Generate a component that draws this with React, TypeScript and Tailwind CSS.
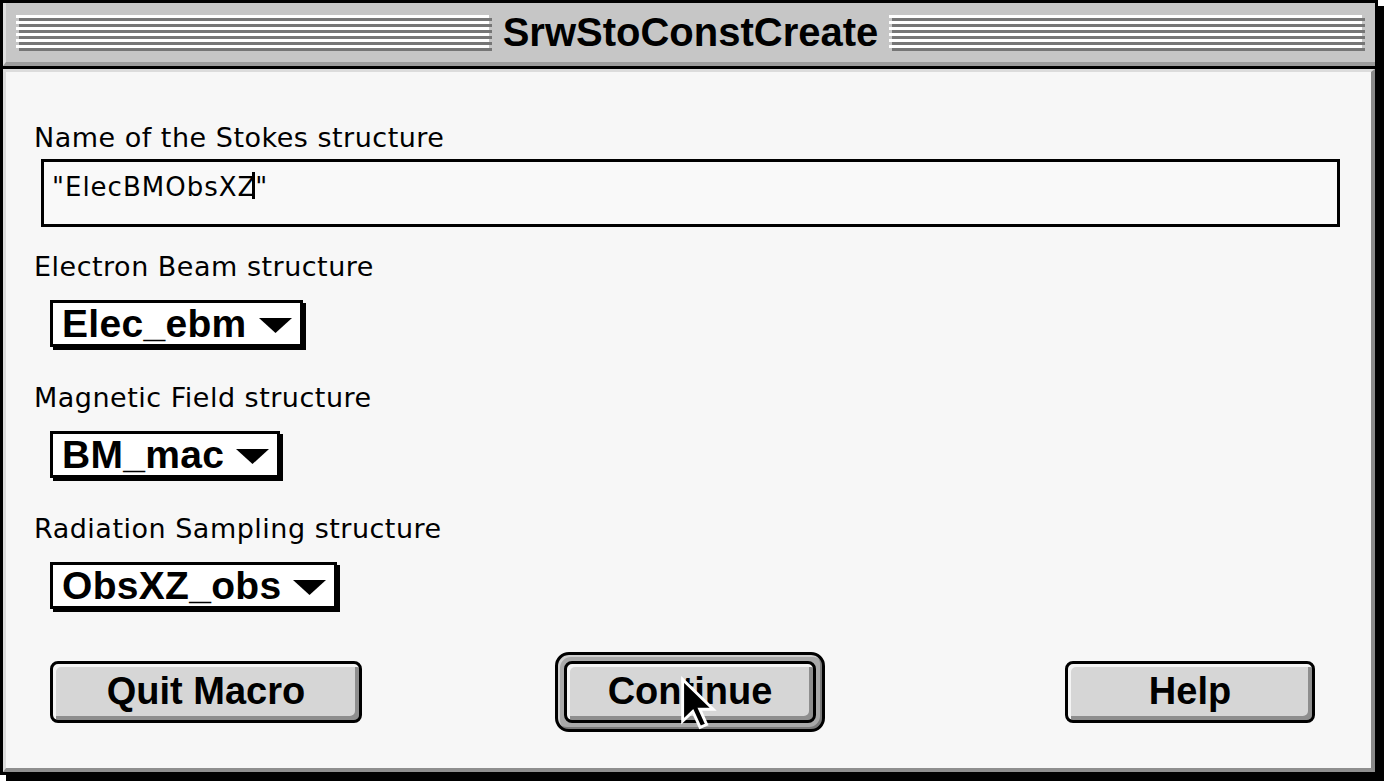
const chicago = "font-['Liberation_Sans',Arial,sans-serif] font-bold";
const geneva = "font-['DejaVu_Sans',Verdana,sans-serif]";

function Stripes() {
  return (
    <div className="flex-1 flex flex-col mt-[1px]">
      {[0, 1, 2, 3, 4, 5].map((i) => (
        <div key={i} className="flex flex-col">
          <div className="h-[3px] bg-white mr-[3px]" />
          <div className="h-[3px] bg-[#767676] ml-[3px]" />
        </div>
      ))}
    </div>
  );
}

function Label({ text, top }: { text: string; top: string }) {
  return (
    <div className={`${geneva} ${top} ml-[28px] text-[27px] leading-[32px] tracking-[0.5px] text-black`}>
      {text}
    </div>
  );
}

function Popup({ value }: { value: string }) {
  return (
    <div className="ml-[44px] mt-[17px] self-start">
      <div className="flex items-center h-[47px] border-[3px] border-black bg-white shadow-[3px_3px_0_#000] pl-[9px] pr-[8px]">
        <span className={`${chicago} text-[39px] leading-[41px] tracking-[0.3px] text-black`}>{value}</span>
        <svg width="33" height="15" viewBox="0 0 33 15" className="ml-[12px] mt-[3px]">
          <polygon points="0,0 33,0 16.5,15" fill="#000" />
        </svg>
      </div>
    </div>
  );
}

function Button({ text, width }: { text: string; width: string }) {
  return (
    <div
      className={`${width} h-[62px] rounded-[8px] border-[3px] border-black bg-[#d6d6d6] shadow-[inset_3px_3px_0_#f4f4f4,inset_-4px_-4px_0_#8e8e8e] flex items-center justify-center`}
    >
      <span className={`${chicago} text-[38px] leading-[40px] text-black -mt-[3px]`}>{text}</span>
    </div>
  );
}

export default function App() {
  return (
    <div className="relative w-[1384px] h-[781px] bg-white overflow-hidden">
      <div className="w-[1378px] h-[775px] border-[3px] border-black shadow-[6px_6px_0_#000] flex flex-col bg-[#f7f7f7]">
        {/* title bar */}
        <div className="h-[63px] shrink-0 bg-[#c6c6c6] border-l-[3px] border-l-[#dedede] border-b-[4px] border-b-[#9c9c9c] flex items-center pl-[10px] pr-[10px]">
          <Stripes />
          <div className={`${chicago} px-[11px] text-[40px] leading-[59px] text-black`}>SrwStoConstCreate</div>
          <Stripes />
        </div>
        <div className="h-[3px] shrink-0 bg-black" />

        {/* content */}
        <div className="flex-1 flex flex-col border-l-[3px] border-l-[#dcdcdc] border-t-[3px] border-t-[#dcdcdc] border-r-[4px] border-r-[#8a8a8a] border-b-[4px] border-b-[#8f8f8f]">
          <Label text="Name of the Stokes structure" top="mt-[50px]" />
          <div className="ml-[35px] mt-[5px] w-[1299px] h-[68px] border-[3px] border-black bg-[#f9f9f9] pl-[8px] pt-[9px]">
            <span className={`${geneva} text-[26px] leading-[32px] tracking-[1px] text-black whitespace-pre`}>
              "ElecBMObsXZ
              <span className="inline-block align-top w-[3px] h-[27px] bg-black -ml-[4px] mt-[1px]" />
              "
            </span>
          </div>

          <Label text="Electron Beam structure" top="mt-[24px]" />
          <Popup value="Elec_ebm" />

          <Label text="Magnetic Field structure" top="mt-[35px]" />
          <Popup value="BM_mac" />

          <Label text="Radiation Sampling structure" top="mt-[35px]" />
          <Popup value="ObsXZ_obs" />

          <div className="flex items-center mt-[43px] ml-[44px]">
            <Button text="Quit Macro" width="w-[312px]" />
            <div className="ml-[193px] w-[270px] h-[80px] rounded-[14px] border-[3px] border-black bg-[#a9a9a9] shadow-[inset_2px_2px_0_#d0d0d0,inset_-2px_-2px_0_#7a7a7a] p-[6px] flex">
              <Button text="Continue" width="w-full" />
            </div>
            <div className="ml-[240px]">
              <Button text="Help" width="w-[250px]" />
            </div>
          </div>
        </div>
      </div>

      {/* mouse pointer */}
      <svg
        className="absolute left-[679px] top-[675px]"
        width="40"
        height="56"
        viewBox="-1 -1 11 15"
      >
        <path
          d="M0 0 L0 11.5 L2.8 8.8 L4.8 13.2 L6.6 12.4 L4.7 8.2 L8.4 8.2 Z"
          fill="#000"
          stroke="#fff"
          strokeWidth="0.8"
          strokeLinejoin="miter"
        />
      </svg>
    </div>
  );
}
